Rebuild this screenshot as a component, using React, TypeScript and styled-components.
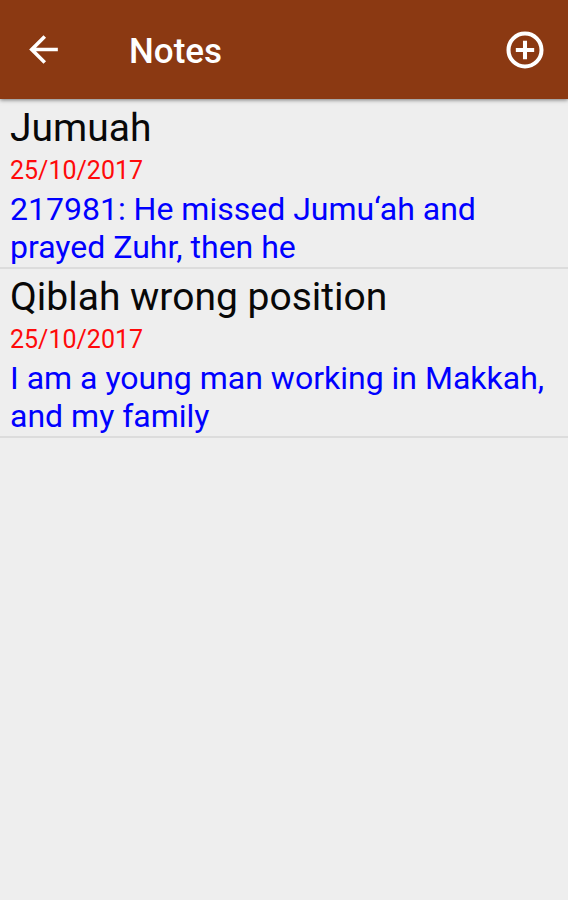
import React from "react";
import styled, { createGlobalStyle } from "styled-components";

const GlobalStyle = createGlobalStyle`
  * { box-sizing: border-box; }
  body { margin: 0; background: #eeeeee; font-family: Roboto, "Liberation Sans", sans-serif; }
`;

const Page = styled.div`
  min-height: 100vh;
  background: #eeeeee;
`;

const AppBar = styled.header`
  display: flex;
  align-items: center;
  height: 99px;
  padding: 0 18px;
  background: #8b3912;
  color: #ffffff;
  box-shadow: 0 1px 4px rgba(0, 0, 0, 0.5);
`;

const Title = styled.h1`
  flex: 1;
  margin: 0 0 0 60px;
  padding-top: 4px;
  font-size: 35px;
  line-height: 44px;
  font-weight: 500;
`;

const IconButton = styled.button`
  display: flex;
  align-items: center;
  justify-content: center;
  width: 51px;
  height: 51px;
  padding: 0;
  border: 0;
  background: transparent;
  color: inherit;
  cursor: pointer;
`;

const NoteList = styled.ul`
  margin: 0;
  padding: 1px 0 0;
  list-style: none;
`;

const NoteItem = styled.li`
  padding: 6px 10px 1px;
  border-bottom: 2px solid #dcdcdc;
`;

const NoteTitle = styled.h2`
  margin: 0 0 2px;
  color: #080808;
  font-size: 39px;
  line-height: 44px;
  font-weight: 400;
`;

const NoteDate = styled.time`
  display: block;
  color: #ff0a0a;
  font-size: 25px;
  line-height: 38px;
`;

const NoteText = styled.p`
  margin: 0;
  color: #0000ff;
  font-size: 32px;
  line-height: 38px;
`;

const notes = [
  { title: "Jumuah", text: "217981: He missed Jumu‘ah and prayed Zuhr, then he" },
  { title: "Qiblah wrong position", text: "I am a young man working in Makkah, and my family" },
];

export default function App() {
  return (
    <Page>
      <GlobalStyle />
      <AppBar>
        <IconButton type="button" aria-label="Back">
          <svg width="43" height="43" viewBox="0 0 24 24" fill="currentColor">
            <path d="M20 11H7.83l5.59-5.59L12 4l-8 8 8 8 1.41-1.41L7.83 13H20v-2z" />
          </svg>
        </IconButton>
        <Title>Notes</Title>
        <IconButton type="button" aria-label="Add note">
          <svg width="44" height="44" viewBox="0 0 24 24" fill="none" stroke="currentColor" strokeWidth="2.2">
            <circle cx="12" cy="12" r="9" />
            <path d="M12 7v10M7 12h10" />
          </svg>
        </IconButton>
      </AppBar>
      <NoteList>
        {notes.map((note) => (
          <NoteItem key={note.title}>
            <NoteTitle>{note.title}</NoteTitle>
            <NoteDate dateTime="2017-10-25">25/10/2017</NoteDate>
            <NoteText>{note.text}</NoteText>
          </NoteItem>
        ))}
      </NoteList>
    </Page>
  );
}
